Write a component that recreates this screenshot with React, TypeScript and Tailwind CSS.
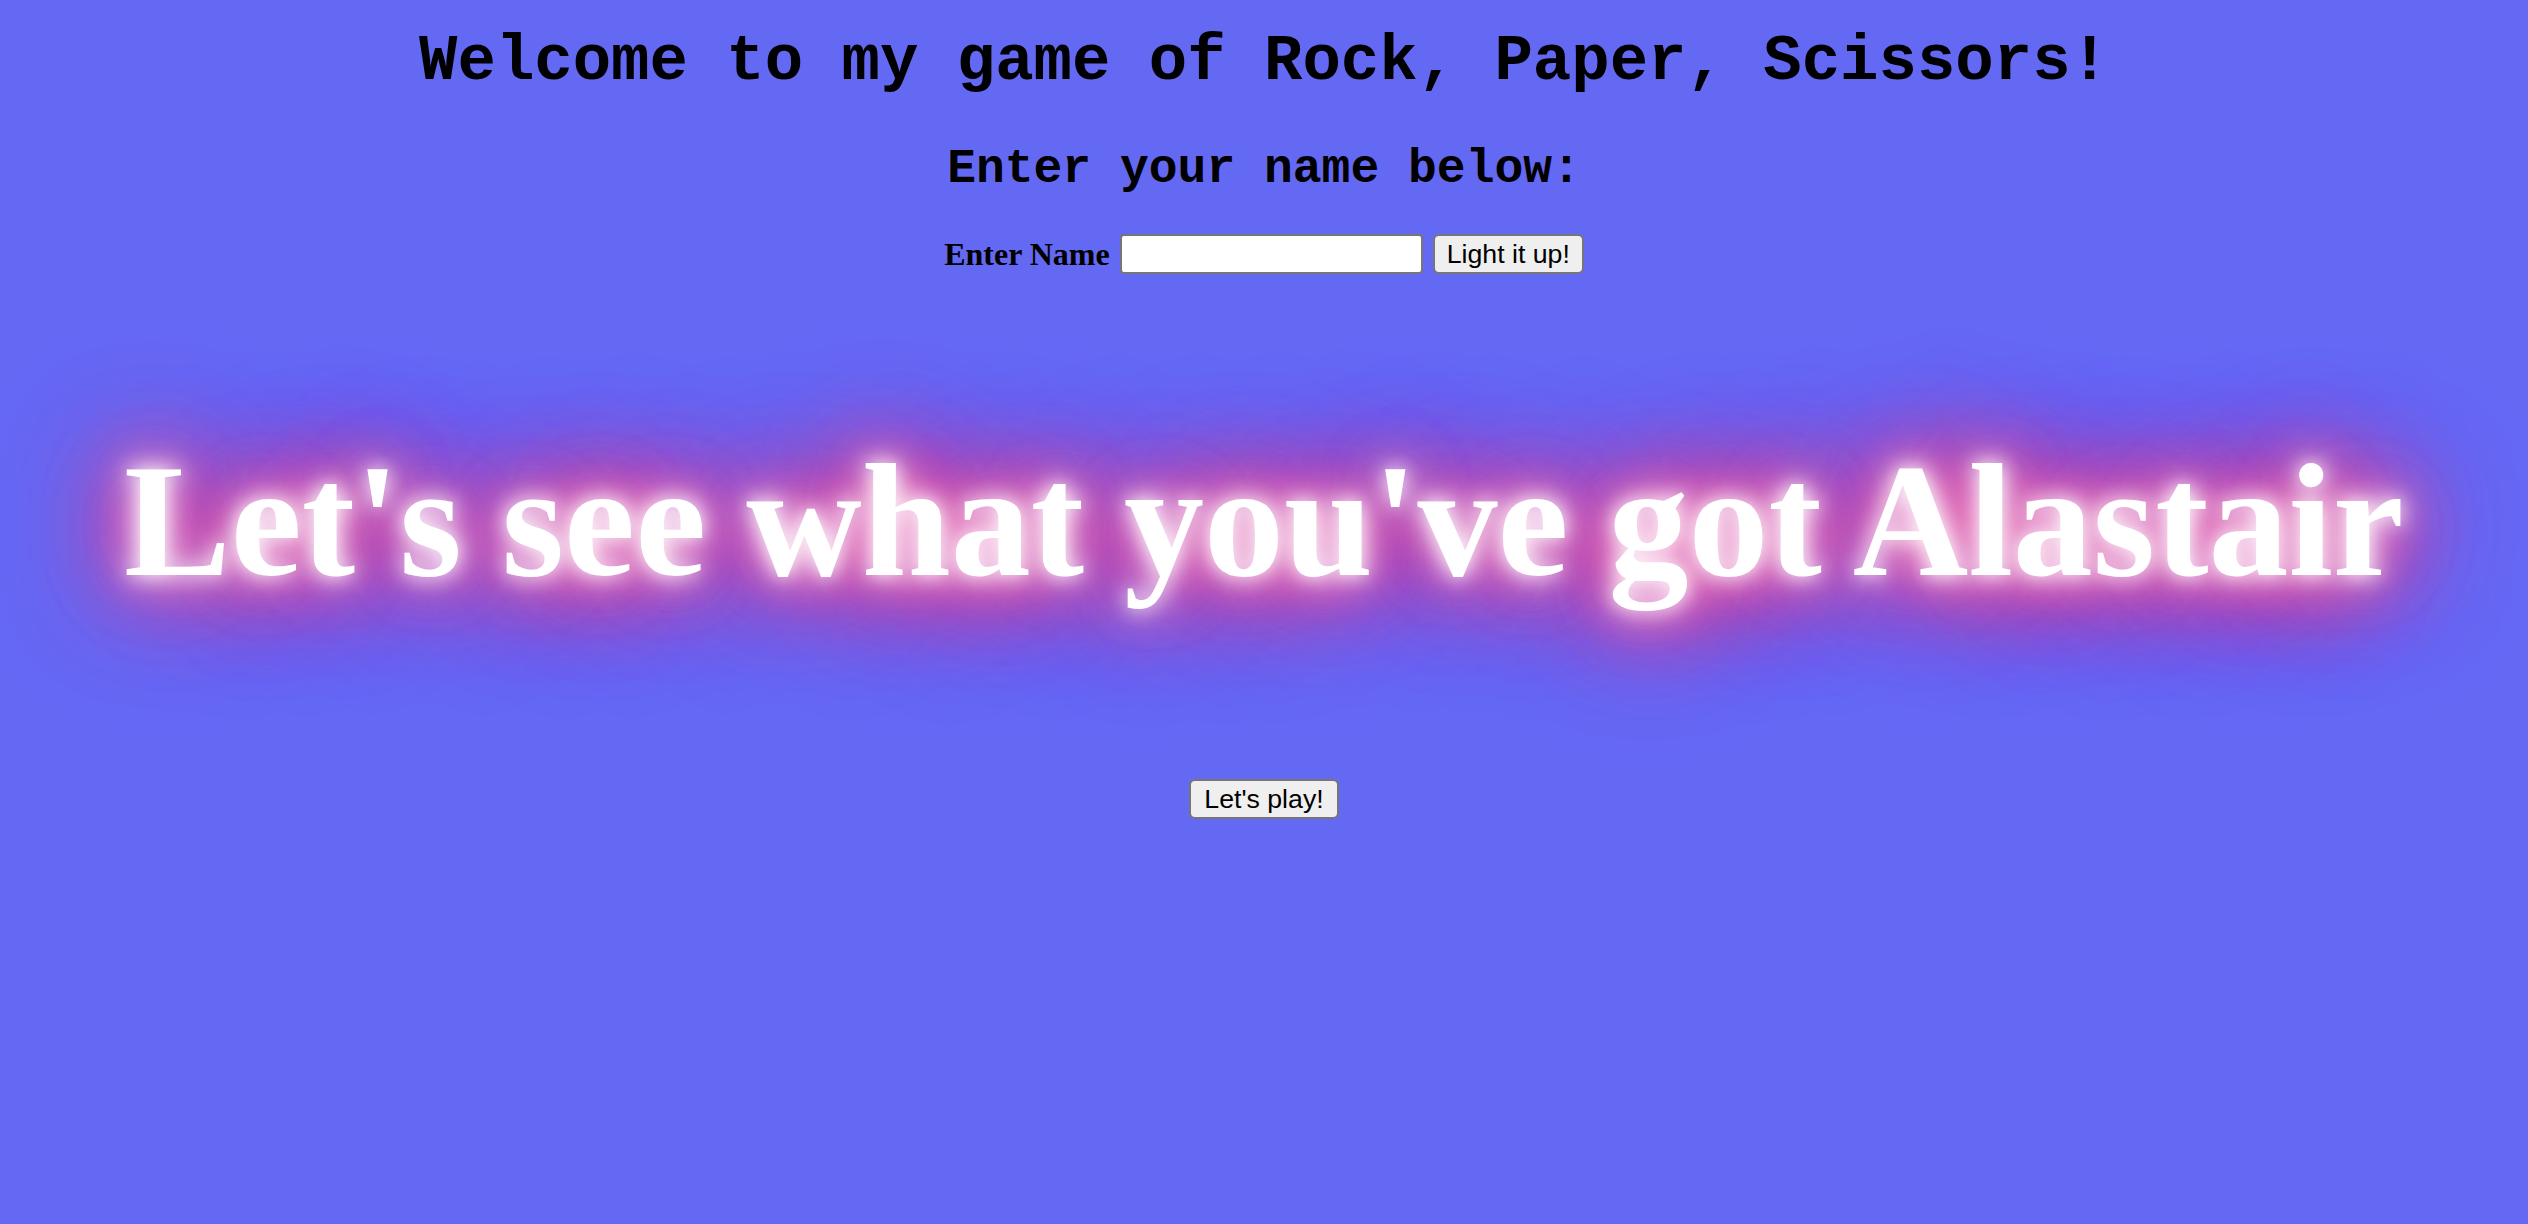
export default function App() {
  return (
    <div className="min-h-[1224px] w-full bg-[#6469f4] pt-[26px] text-center text-black">
      <h1 className="font-['Liberation_Mono','Courier_New',monospace] text-[64px] font-bold leading-[72px]">
        Welcome to my game of Rock, Paper, Scissors!
      </h1>
      <h2 className="mt-[43px] font-['Liberation_Mono','Courier_New',monospace] text-[48px] font-bold leading-[56px]">
        Enter your name below:
      </h2>

      <form
        className="mt-[33px] flex items-center justify-center gap-[10px]"
        onSubmit={(e) => e.preventDefault()}
      >
        <label
          htmlFor="name"
          className="font-['Liberation_Serif','Times_New_Roman',serif] text-[32px] font-bold"
        >
          Enter Name
        </label>
        <input
          id="name"
          type="text"
          className="h-[40px] w-[303px] rounded-[4px] border-2 border-[#767676] bg-white px-[4px] font-['Liberation_Sans',Arial,sans-serif] text-[26px]"
        />
        <button
          type="submit"
          className="h-[40px] rounded-[6px] border-2 border-[#767676] bg-[#efefef] px-[12px] font-['Liberation_Sans',Arial,sans-serif] text-[26.7px] leading-none"
        >
          Light it up!
        </button>
      </form>

      {/* neon glow */}
      <p className="mt-[163px] font-['Liberation_Serif','Times_New_Roman',serif] text-[160px] font-bold leading-[160px] text-white [text-shadow:0_0_20px_#fff,0_0_40px_#fff,0_0_60px_#f5449c,0_0_80px_#f0408f,0_0_100px_#ee3c8c,0_0_120px_#ec388a,0_0_140px_#ea3488]">
        Let's see what you've got Alastair
      </p>

      <div className="mt-[178px] flex justify-center">
        <button
          type="button"
          className="h-[40px] w-[150px] rounded-[6px] border-2 border-[#767676] bg-[#efefef] font-['Liberation_Sans',Arial,sans-serif] text-[26.7px] leading-none"
        >
          Let's play!
        </button>
      </div>
    </div>
  );
}
